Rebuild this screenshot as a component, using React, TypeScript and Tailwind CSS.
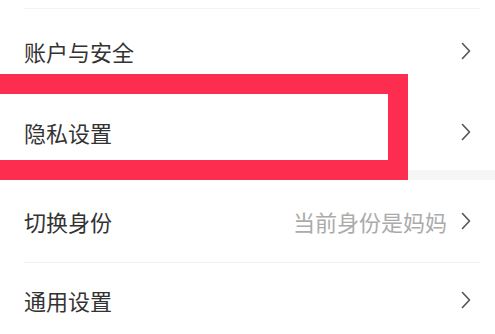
import React from "react";

type Row = { label: string; value?: string; height: string };

const Chevron = () => (
  <svg width="10" height="18" viewBox="0 0 10 18" fill="none" className="shrink-0">
    <path d="M1.5 1.5 L8.5 9 L1.5 16.5" stroke="#555" strokeWidth="1.6" strokeLinecap="round" strokeLinejoin="round" />
  </svg>
);

function SettingRow({ label, value, height }: Row) {
  return (
    <div className={`flex items-center justify-between pl-6 pr-6 ${height}`}>
      <span className="text-[22px] leading-none text-[#333]">{label}</span>
      <div className="flex items-center gap-[14px]">
        {value && <span className="text-[22px] leading-none text-[#ababab]">{value}</span>}
        <Chevron />
      </div>
    </div>
  );
}

export default function App() {
  return (
    <div
      className="relative h-[334px] w-[495px] overflow-hidden bg-white"
      style={{ fontFamily: '"Noto Sans CJK SC", "Noto Sans", sans-serif' }}
    >
      <div className="h-2" />
      <div className="ml-6 mr-[15px] h-px bg-[#f3f3f3]" />
      <SettingRow label="账户与安全" height="h-[84px]" />
      <SettingRow label="隐私设置" height="h-[77px]" />
      <div className="h-[10px] bg-[#f6f6f6]" />
      <SettingRow label="切换身份" value="当前身份是妈妈" height="h-[82px]" />
      <div className="ml-6 mr-[15px] h-px bg-[#f3f3f3]" />
      <SettingRow label="通用设置" height="h-[74px]" />

      {/* highlight frame around 隐私设置 */}
      <div className="pointer-events-none absolute left-[-20px] top-[74px] h-[106px] w-[428px] border-[20px] border-[#fd2d4f]" />
    </div>
  );
}
